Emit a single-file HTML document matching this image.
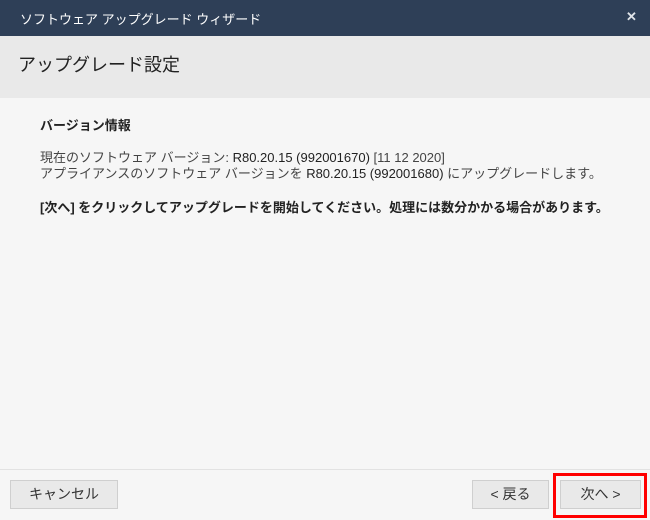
<!DOCTYPE html>
<html><head><meta charset="utf-8"><style>
*{margin:0;padding:0;box-sizing:border-box}
body{width:650px;height:520px;overflow:hidden;background:#f6f6f6;font-family:"Liberation Sans","Noto Sans CJK JP",sans-serif;color:#333;position:relative}
.t{position:absolute;white-space:nowrap}
.bar{position:absolute;left:0;top:0;width:650px;height:36px;background:#2e3f57}
.hd{position:absolute;left:0;top:36px;width:650px;height:62px;background:#e9e9e9}
.btn{position:absolute;top:480px;height:29px;background:#e9e9e9;border:1px solid #cfcfcf;font-size:14px;color:#333;text-align:center;line-height:27px}
</style></head><body>
<div class="bar"></div>
<div class="t" style="left:20px;top:9px;font-size:13px;color:#fff">ソフトウェア アップグレード ウィザード</div>
<div class="t" style="left:626px;top:9px;font-size:13px;color:#dfe3e8;font-weight:bold">✕</div>
<div class="hd"></div>
<div class="t" style="left:18px;top:51px;font-size:18px;color:#222">アップグレード設定</div>
<div class="t" style="left:40px;top:115px;font-size:13px;font-weight:bold;color:#222">バージョン情報</div>
<div class="t" style="left:40px;top:147px;font-size:13px;color:#444">現在のソフトウェア バージョン: <span style="color:#222">R80.20.15 (992001670)</span> [11 12 2020]</div>
<div class="t" style="left:40px;top:163px;font-size:13px;color:#444">アプライアンスのソフトウェア バージョンを <span style="color:#222">R80.20.15 (992001680)</span> にアップグレードします。</div>
<div class="t" style="left:40px;top:197px;font-size:13px;font-weight:bold;color:#222">[次へ] をクリックしてアップグレードを開始してください。処理には数分かかる場合があります。</div>
<div style="position:absolute;left:0;top:469px;width:650px;height:1px;background:#e2e2e2"></div>
<div class="btn" style="left:10px;width:108px">キャンセル</div>
<div class="btn" style="left:472px;width:77px">&lt; 戻る</div>
<div class="btn" style="left:560px;width:81px">次へ &gt;</div>
<div style="position:absolute;left:553px;top:473px;width:94px;height:45px;border:3px solid #f00"></div>
</body></html>
